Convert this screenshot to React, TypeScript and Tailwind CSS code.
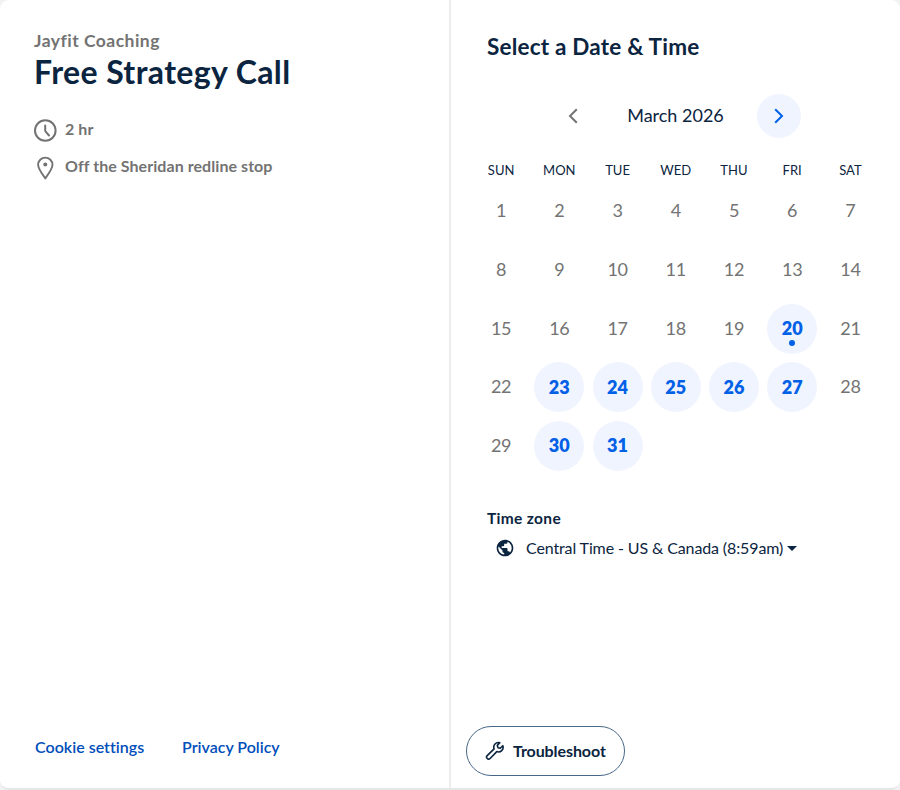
import React from "react";

const weekdays = ["SUN", "MON", "TUE", "WED", "THU", "FRI", "SAT"];
const days = Array.from({ length: 31 }, (_, i) => i + 1);
const available = new Set([20, 23, 24, 25, 26, 27, 30, 31]);
const today = 20;

function Chevron({ flip = false }: { flip?: boolean }) {
  return (
    <svg width="10" height="16" viewBox="0 0 10 16" fill="none" stroke="currentColor" strokeWidth="2">
      <path d={flip ? "M1.2 1.2 8 8l-6.8 6.8" : "M8.8 1.2 2 8l6.8 6.8"} />
    </svg>
  );
}

function Day({ day }: { day: number }) {
  if (!available.has(day)) {
    return <span className="pb-px text-[18px] tracking-[-0.3px] text-[#737373]">{day}</span>;
  }
  return (
    <button className="relative flex size-[50px] items-center justify-center rounded-full bg-[#f0f4ff] text-[18px] font-extrabold text-[#0060e6]">
      {day}
      {day === today && <span className="absolute bottom-[8px] size-[6px] rounded-full bg-[#0060e6]" />}
    </button>
  );
}

function EventDetails() {
  return (
    <section className="flex w-[451px] shrink-0 flex-col border-r-2 border-[#ededed] pl-[34px]">
      <p className="mt-[30px] h-[22px] text-[17.5px] leading-[22px] font-bold tracking-[0.48px] whitespace-nowrap text-[#737373]">Jayfit Coaching</p>
      <h1 className="h-[40px] text-[32px] leading-[40px] font-bold tracking-[0.38px] whitespace-nowrap text-[#0b2440]">Free Strategy Call</h1>
      <div className="mt-[26px] flex h-[24px] items-center text-[#737373]">
        <svg className="mt-px" width="23" height="23" viewBox="0 0 23 23" fill="none" stroke="currentColor" strokeWidth="2">
          <circle cx="11.3" cy="11.5" r="10.3" />
          <path d="M11.2 6.4v5.2q0 .5.3.8l3.5 4.1" strokeLinecap="round" />
        </svg>
        <span className="ml-[8px] pb-[2px] text-[16px] font-bold tracking-[0.1px] whitespace-nowrap">2 hr</span>
      </div>
      <div className="mt-[13px] flex h-[24px] items-center text-[#737373]">
        <svg className="mt-px" width="23" height="24" viewBox="0 0 23 24" fill="none" stroke="currentColor" strokeWidth="1.9">
          <path d="M11.3 22.4C8.8 19 4.1 12.7 4.1 8.8a7.2 7.2 0 0 1 14.4 0c0 3.9-4.7 10.2-7.2 13.6Z" strokeLinejoin="round" />
          <circle cx="11.3" cy="8.6" r="2" fill="currentColor" stroke="none" />
        </svg>
        <span className="ml-[8px] pb-[2px] text-[16px] font-bold tracking-[0.06px] whitespace-nowrap">Off the Sheridan redline stop</span>
      </div>
      <nav className="mt-auto mb-[30px] flex h-[22px] text-[16px] leading-[22px] font-semibold whitespace-nowrap text-[#004eba]">
        <a className="ml-px w-[147px] tracking-[0.02px]">Cookie settings</a>
        <a>Privacy Policy</a>
      </nav>
    </section>
  );
}

function Scheduler() {
  return (
    <section className="flex flex-1 flex-col text-[#0b2440]">
      <h2 className="mt-[33px] ml-[36px] h-[28px] text-[22.5px] leading-[28px] font-bold tracking-[0.2px] whitespace-nowrap">Select a Date &amp; Time</h2>
      <div className="mt-[33px] ml-[99.5px] flex h-[44px] w-[250px] items-center justify-between">
        <button className="flex size-[44px] items-center justify-center text-[#737373]">
          <Chevron />
        </button>
        <span className="pb-[2px] text-[18px] whitespace-nowrap">March 2026</span>
        <button className="flex size-[44px] items-center justify-center rounded-full bg-[#f0f4ff] text-[#0060e6]">
          <Chevron flip />
        </button>
      </div>
      <div className="mt-[22px] ml-[21px] grid w-[407.5px] grid-cols-7">
        {weekdays.map((d) => (
          <span key={d} className="h-[20px] text-center text-[13px] leading-[20px]">{d}</span>
        ))}
      </div>
      <div className="mt-[2px] ml-[21px] grid w-[407.5px] auto-rows-[58.67px] grid-cols-7">
        {days.map((d) => (
          <div key={d} className="flex items-center justify-center">
            <Day day={d} />
          </div>
        ))}
      </div>
      <h3 className="mt-[33px] ml-[36px] h-[20px] text-[15.5px] leading-[20px] font-bold tracking-[0.32px]">Time zone</h3>
      <div className="mt-[9px] ml-[44px] flex h-[22px] items-center whitespace-nowrap">
        <svg width="20" height="20" viewBox="0 0 24 24" fill="currentColor">
          <path d="M12 2C6.48 2 2 6.48 2 12s4.48 10 10 10 10-4.48 10-10S17.52 2 12 2zm-1 17.93c-3.95-.49-7-3.85-7-7.93 0-.62.08-1.21.21-1.79L9 15v1c0 1.1.9 2 2 2v1.93zm6.9-2.54c-.26-.81-1-1.39-1.9-1.39h-1v-3c0-.55-.45-1-1-1H8v-2h2c.55 0 1-.45 1-1V7h2c1.1 0 2-.9 2-2v-.41c2.93 1.19 5 4.06 5 7.41 0 2.08-.8 3.97-2.1 5.39z" />
        </svg>
        <span className="ml-[11px] w-[261px] text-[16px] tracking-[-0.12px]">Central Time - US &amp; Canada (8:59am)</span>
        <span className="size-0 border-x-[5px] border-t-[5px] border-x-transparent border-t-current" />
      </div>
      <button className="mt-auto mb-[12px] ml-[15px] flex h-[50px] w-[159px] items-center rounded-full border border-[#476788] pl-[18px]">
        <svg width="20" height="20" viewBox="0 0 20 20" fill="none" stroke="currentColor" strokeWidth="1.6" strokeLinejoin="round">
          <path d="M14.8 1.8a4.6 4.6 0 0 0-5.7 6.1l-6.9 6.7a2 2 0 0 0 2.9 2.9l6.7-6.9a4.6 4.6 0 0 0 6-5.9l-2.6 2.6-2.2-.6-.7-2.3Z" />
        </svg>
        <span className="ml-[8px] pb-px text-[16px] font-bold tracking-[-0.08px]">Troubleshoot</span>
      </button>
    </section>
  );
}

export default function App() {
  return (
    <div className="h-[790px] w-[900px] overflow-hidden bg-[#f1f2f3] font-['Lato','Liberation_Sans',sans-serif] [font-variant-ligatures:none]">
      <main className="flex h-[790px] w-[900px] overflow-hidden rounded-[9px] border-b-2 border-[#e6e6e6] bg-white">
        <EventDetails />
        <Scheduler />
      </main>
    </div>
  );
}
